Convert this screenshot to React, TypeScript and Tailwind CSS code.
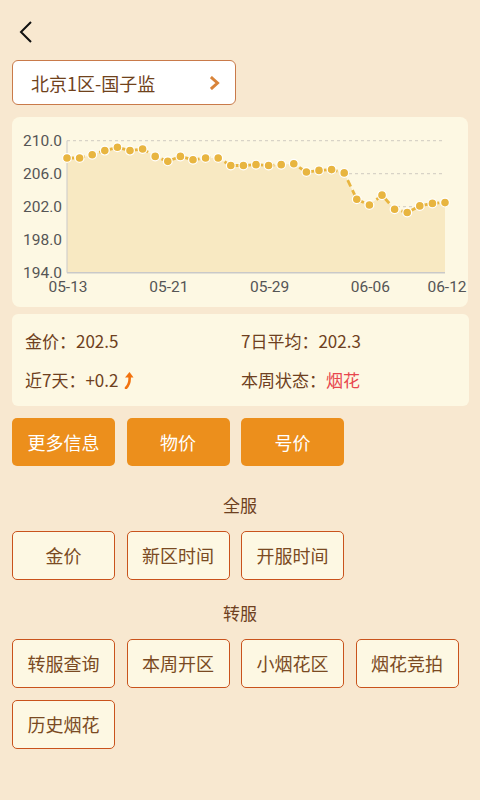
import React from "react";

const data = [
  207.9, 207.9, 208.3, 208.8, 209.2, 208.8, 209.0, 208.1, 207.5, 208.1, 207.7,
  207.9, 207.9, 207.0, 207.0, 207.1, 207.0, 207.1, 207.2, 206.2, 206.4, 206.5,
  206.1, 202.9, 202.2, 203.4, 201.7, 201.3, 202.1, 202.4, 202.5,
];

const L = 55;
const R = 433;
const T = 23.7;
const B = 155.7;
const yOf = (v: number) => T + ((210 - v) / 16) * (B - T);
const xOf = (i: number) => L + (i * (R - L)) / 30;
const FF = "Roboto, 'Noto Sans', sans-serif";

function Chart() {
  const pts = data.map((v, i) => [xOf(i), yOf(v)] as const);
  const line = pts.map(([x, y], i) => `${i ? "L" : "M"}${x.toFixed(1)} ${y.toFixed(1)}`).join(" ");
  const area = `${line} L${R} ${B} L${L} ${B} Z`;
  const ticks = [210, 206, 202, 198, 194];
  const xl = [
    { i: 0, t: "05-13" },
    { i: 8, t: "05-21" },
    { i: 16, t: "05-29" },
    { i: 24, t: "06-06" },
  ];
  return (
    <svg width="456" height="190" viewBox="0 0 456 190" className="block">
      {ticks.map((t) => (
        <g key={t}>
          {t !== 194 && (
            <line x1={L} x2={R} y1={yOf(t)} y2={yOf(t)} stroke="#cfcac0" strokeWidth="1" strokeDasharray="3 3" />
          )}
          <text x={50} y={yOf(t) + 5.5} textAnchor="end" fontSize="15.5" fill="#555555" fontFamily={FF}>
            {t.toFixed(1)}
          </text>
        </g>
      ))}
      <path d={area} fill="#f8e9c2" />
      <line x1={L} x2={L} y1={T} y2={B} stroke="#c9c9c9" strokeWidth="1" />
      <line x1={L} x2={R} y1={B} y2={B} stroke="#c9c9c9" strokeWidth="1.5" />
      <path d={line} fill="none" stroke="#e8b540" strokeWidth="2.8" strokeDasharray="7 4" strokeLinejoin="round" />
      {pts.map(([x, y], i) => (
        <circle key={i} cx={x} cy={y} r="4.4" fill="#e8b540" stroke="#ffffff" strokeWidth="1.2" />
      ))}
      {xl.map(({ i, t }) => (
        <text key={t} x={xOf(i) + 1} y={175} textAnchor="middle" fontSize="15.5" fill="#555555" fontFamily={FF}>
          {t}
        </text>
      ))}
      <text x={435} y={175} textAnchor="middle" fontSize="15.5" fill="#555555" fontFamily={FF}>
        06-12
      </text>
    </svg>
  );
}

function OutlineBtn({ label }: { label: string }) {
  return (
    <div className="w-[103px] h-[49px] rounded-[5px] border-[1.5px] border-[#c9531c] bg-[#fdf8e3] flex items-center justify-center text-[18px] text-[#7a4a22]">
      {label}
    </div>
  );
}

function OrangeBtn({ label }: { label: string }) {
  return (
    <div className="w-[103px] h-[48px] rounded-[5px] bg-[#ec8f1c] flex items-center justify-center text-[18px] text-white">
      {label}
    </div>
  );
}

export default function App() {
  return (
    <div
      className="w-[480px] h-[800px] bg-[#f8e8d0] overflow-hidden"
      style={{ fontFamily: "'Noto Sans CJK SC', 'Noto Sans', sans-serif" }}
    >
      <div className="h-[60px] pl-[19px] pt-[21px]">
        <svg width="14" height="22" viewBox="0 0 14 22">
          <path d="M12 1 L2 11 L12 21" fill="none" stroke="#111111" strokeWidth="2" />
        </svg>
      </div>
      <div className="px-3">
        <div className="w-[224px] h-[45px] rounded-[6px] border border-[#c97a4a] bg-white flex items-center justify-between pl-[18px] pr-[15px]">
          <span className="text-[18px] text-[#70421c] leading-none">北京1区-国子监</span>
          <svg width="10" height="14" viewBox="0 0 10 14">
            <path d="M2 2 L7.5 7 L2 12" fill="none" stroke="#d9843a" strokeWidth="3" strokeLinecap="square" />
          </svg>
        </div>
        <div className="mt-3 w-[456px] h-[190px] rounded-[8px] bg-[#fdf8e3]">
          <Chart />
        </div>
        <div className="mt-[7px] w-[457px] h-[92px] rounded-[6px] bg-[#fdf8e3] grid grid-cols-[216px_1fr] content-center gap-y-[15px] pl-[13px] text-[17px] text-[#6e4020] leading-[24px]">
          <div>金价：202.5</div>
          <div>7日平均：202.3</div>
          <div className="flex items-center">
            <span>近7天：+0.2</span>
            <svg width="12" height="18" viewBox="0 0 12 18" className="ml-[5px]">
              <path d="M3 17 C7 13 7 9 6.5 5" fill="none" stroke="#f2720e" strokeWidth="2.6" strokeLinecap="round" />
              <path d="M2 6.5 L6.5 1 L10.5 6.5 Z" fill="#f2720e" />
            </svg>
          </div>
          <div>
            本周状态：<span className="text-[#e8474e]">烟花</span>
          </div>
        </div>
        <div className="mt-[12px] flex gap-x-[11.5px]">
          <OrangeBtn label="更多信息" />
          <OrangeBtn label="物价" />
          <OrangeBtn label="号价" />
        </div>
        <div className="mt-[27px] text-center text-[17px] text-[#6e4020] leading-[24px]">全服</div>
        <div className="mt-[14px] flex gap-x-[11.5px]">
          <OutlineBtn label="金价" />
          <OutlineBtn label="新区时间" />
          <OutlineBtn label="开服时间" />
        </div>
        <div className="mt-[21px] text-center text-[17px] text-[#6e4020] leading-[24px]">转服</div>
        <div className="mt-[14px] flex flex-wrap gap-x-[11.5px] gap-y-[12px]">
          <OutlineBtn label="转服查询" />
          <OutlineBtn label="本周开区" />
          <OutlineBtn label="小烟花区" />
          <OutlineBtn label="烟花竞拍" />
          <OutlineBtn label="历史烟花" />
        </div>
      </div>
    </div>
  );
}
